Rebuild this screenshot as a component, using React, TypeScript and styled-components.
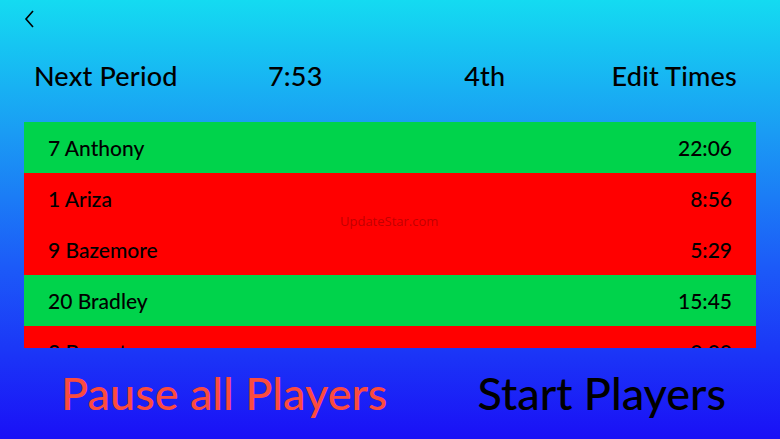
import styled, { createGlobalStyle } from "styled-components";

const GlobalStyle = createGlobalStyle`
  html, body {
    margin: 0;
    padding: 0;
  }
  body {
    font-family: "Lato", "Liberation Sans", sans-serif;
  }
`;

const Screen = styled.div`
  position: relative;
  width: 780px;
  height: 439px;
  overflow: hidden;
  display: flex;
  flex-direction: column;
  background: linear-gradient(180deg, #14dbf1 0%, #1a9cf4 30%, #1c5cf8 60%, #1a10f6 100%);
  color: #000;
`;

const NavBar = styled.div`
  height: 40px;
  display: flex;
  align-items: center;
  padding-left: 22px;
`;

const BackButton = styled.button`
  background: none;
  border: none;
  padding: 0;
  width: 16px;
  height: 20px;
  display: flex;
  margin-top: -3px;
  cursor: pointer;
`;

const Header = styled.div`
  display: grid;
  grid-template-columns: repeat(4, 1fr);
  padding: 0 11px;
  height: 70px;
  align-items: center;
`;

const HeaderItem = styled.div`
  text-align: center;
  font-size: 27px;
  font-weight: 500;
  letter-spacing: 0.2px;
`;

const List = styled.div`
  margin: 12px 24px 0;
  height: 226px;
  overflow: hidden;
  display: flex;
  flex-direction: column;
`;

const Row = styled.div<{ $active: boolean }>`
  flex: 0 0 51px;
  display: flex;
  align-items: center;
  justify-content: space-between;
  padding: 0 24px;
  background: ${(p) => (p.$active ? "#00d34b" : "#ff0000")};
  font-size: 21px;
  font-weight: 500;
`;

const Footer = styled.div`
  flex: 1;
  display: flex;
  align-items: center;
  justify-content: space-between;
  padding: 0 54px 2px 61px;
`;

const ActionButton = styled.button<{ $tone: "pause" | "start" }>`
  background: none;
  border: none;
  padding: 0;
  font-family: "Lato", "Liberation Sans", sans-serif;
  font-size: 45px;
  font-weight: 500;
  color: ${(p) => (p.$tone === "pause" ? "#fb4b3e" : "#000")};
  cursor: pointer;
`;

const Watermark = styled.div`
  position: absolute;
  left: 340px;
  top: 212px;
  font-family: "Open Sans", "Liberation Sans", sans-serif;
  font-size: 13px;
  color: rgba(90, 0, 0, 0.4);
  pointer-events: none;
`;

const players = [
  { name: "7 Anthony", time: "22:06", active: true },
  { name: "1 Ariza", time: "8:56", active: false },
  { name: "9 Bazemore", time: "5:29", active: false },
  { name: "20 Bradley", time: "15:45", active: true },
  { name: "3 Bryant", time: "0:00", active: false },
];

export default function App() {
  return (
    <Screen>
      <GlobalStyle />
      <NavBar>
        <BackButton aria-label="Back">
          <svg width="16" height="20" viewBox="0 0 16 20">
            <path d="M11 2 L4 10 L11 18" fill="none" stroke="#000" strokeWidth="1.6" />
          </svg>
        </BackButton>
      </NavBar>
      <Header>
        <HeaderItem>Next Period</HeaderItem>
        <HeaderItem>7:53</HeaderItem>
        <HeaderItem>4th</HeaderItem>
        <HeaderItem>Edit Times</HeaderItem>
      </Header>
      <List>
        {players.map((p) => (
          <Row key={p.name} $active={p.active}>
            <span>{p.name}</span>
            <span>{p.time}</span>
          </Row>
        ))}
      </List>
      <Footer>
        <ActionButton $tone="pause">Pause all Players</ActionButton>
        <ActionButton $tone="start">Start Players</ActionButton>
      </Footer>
      <Watermark>UpdateStar.com</Watermark>
    </Screen>
  );
}
